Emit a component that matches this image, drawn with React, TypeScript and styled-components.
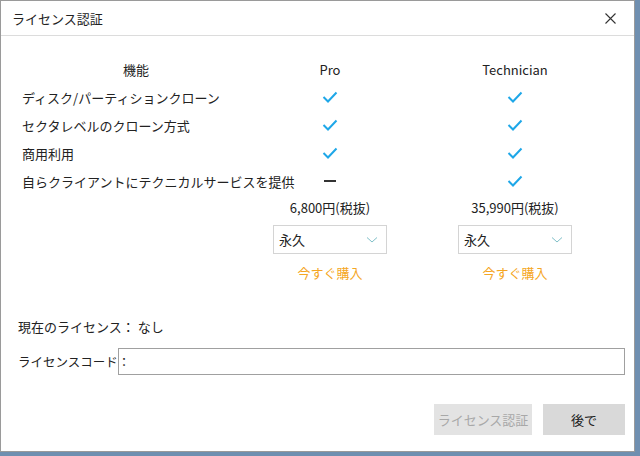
import React from "react";
import styled, { createGlobalStyle } from "styled-components";

const Global = createGlobalStyle`
  html, body { margin: 0; padding: 0; background: #6f8fb0; }
  body { font-family: "Noto Sans CJK JP", "Noto Sans", sans-serif; font-size: 13px; color: #222; }
`;

const Dialog = styled.div`
  width: 635px;
  height: 452px;
  background: #fff;
  border: 1px solid #9a9a9a;
  display: flex;
  flex-direction: column;
  box-sizing: border-box;
`;

const TitleBar = styled.div`
  height: 34px;
  border-bottom: 1px solid #dcdcdc;
  display: flex;
  align-items: center;
  justify-content: space-between;
  padding: 0 18px 0 11px;
  flex-shrink: 0;
`;

const Title = styled.div`
  font-size: 13px;
`;

const Close = () => (
  <svg width="11" height="11" viewBox="0 0 11 11">
    <path d="M0.5 0.5 L10.5 10.5 M10.5 0.5 L0.5 10.5" stroke="#333" strokeWidth="1.1" />
  </svg>
);

const Body = styled.div`
  padding: 19px 9px 0 21px;
  display: flex;
  flex-direction: column;
  flex: 1;
`;

const Grid = styled.div`
  display: grid;
  grid-template-columns: 228px 160px 210px;
  grid-auto-rows: 28px;
  align-items: center;
`;

const Cell = styled.div<{ $center?: boolean }>`
  display: flex;
  justify-content: ${(p) => (p.$center ? "center" : "flex-start")};
  white-space: nowrap;
`;

const Check = () => (
  <svg width="16" height="12" viewBox="0 0 16 12">
    <path d="M1.5 6 L6 10.5 L14.5 1.5" fill="none" stroke="#1ea7e8" strokeWidth="2" />
  </svg>
);

const Dash = styled.div`
  width: 12px;
  height: 2px;
  background: #333;
`;

const Select = styled.div`
  width: 114px;
  height: 29px;
  border: 1px solid #d4d4d4;
  box-sizing: border-box;
  display: flex;
  align-items: center;
  justify-content: space-between;
  padding: 0 8px 0 5px;
  margin-top: 8px;
`;

const BuyLink = styled.div`
  color: #f5a623;
  margin-top: 9px;
`;

const Stack = styled.div`
  display: flex;
  flex-direction: column;
  align-items: center;
`;

const Offers = styled.div`
  display: grid;
  grid-template-columns: 228px 160px 210px;
  margin-top: 3px;
`;

const Status = styled.div`
  margin-top: 35px;
  margin-left: -4px;
`;

const CodeRow = styled.div`
  display: flex;
  align-items: center;
  margin-top: 12px;
  margin-left: -4px;
`;

const CodeLabel = styled.div`
  width: 100px;
  white-space: nowrap;
  font-size: 12.5px;
`;

const CodeInput = styled.div`
  width: 509px;
  height: 27px;
  border: 1px solid #a0a0a0;
  box-sizing: border-box;
`;

const Footer = styled.div`
  display: flex;
  justify-content: flex-end;
  gap: 11px;
  margin-top: 29px;
`;

const Button = styled.div<{ $disabled?: boolean }>`
  height: 31px;
  width: ${(p) => (p.$disabled ? "98px" : "82px")};
  background: ${(p) => (p.$disabled ? "#e3e3e3" : "#d9d9d9")};
  color: ${(p) => (p.$disabled ? "#a8a8a8" : "#222")};
  display: flex;
  align-items: center;
  justify-content: center;
`;

const Chevron = () => (
  <svg width="12" height="8" viewBox="0 0 12 8">
    <path d="M1 1.5 L6 6 L11 1.5" fill="none" stroke="#7fbfc8" strokeWidth="1" />
  </svg>
);

const features: [string, boolean][] = [
  ["ディスク/パーティションクローン", true],
  ["セクタレベルのクローン方式", true],
  ["商用利用", true],
  ["自らクライアントにテクニカルサービスを提供", false],
];

export default function App() {
  return (
    <>
      <Global />
      <Dialog>
        <TitleBar>
          <Title>ライセンス認証</Title>
          <Close />
        </TitleBar>
        <Body>
          <Grid>
            <Cell $center>機能</Cell>
            <Cell $center>Pro</Cell>
            <Cell $center>Technician</Cell>
            {features.map(([name, pro]) => (
              <React.Fragment key={name}>
                <Cell>{name}</Cell>
                <Cell $center>{pro ? <Check /> : <Dash />}</Cell>
                <Cell $center><Check /></Cell>
              </React.Fragment>
            ))}
          </Grid>
          <Offers>
            <div />
            {["6,800円(税抜)", "35,990円(税抜)"].map((price) => (
              <Stack key={price}>
                <div>{price}</div>
                <Select>
                  <span>永久</span>
                  <Chevron />
                </Select>
                <BuyLink>今すぐ購入</BuyLink>
              </Stack>
            ))}
          </Offers>
          <Status>現在のライセンス： なし</Status>
          <CodeRow>
            <CodeLabel>ライセンスコード：</CodeLabel>
            <CodeInput />
          </CodeRow>
          <Footer>
            <Button $disabled>ライセンス認証</Button>
            <Button>後で</Button>
          </Footer>
        </Body>
      </Dialog>
    </>
  );
}
